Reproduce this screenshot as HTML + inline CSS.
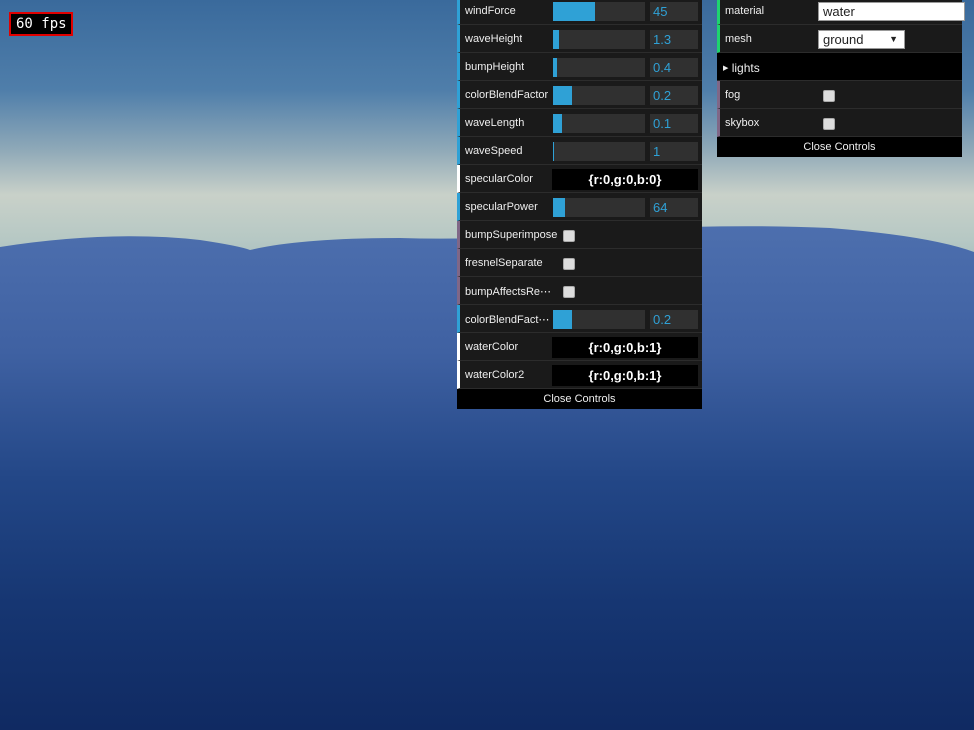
<!DOCTYPE html>
<html><head><meta charset="utf-8"><style>
*{margin:0;padding:0;box-sizing:border-box}
body{width:974px;height:730px;overflow:hidden;position:relative;font-family:"Liberation Sans",sans-serif;font-size:11px;color:#eee;
background:linear-gradient(180deg,#3a6a9c 0px,#4f7eaa 90px,#8fa9b8 150px,#c9d1c9 195px,#b6c8c4 240px,#aac0c0 260px)}
.sea{position:absolute;left:0;top:0}
.fps{position:absolute;left:9px;top:12px;width:64px;height:24px;background:#000;border:2px solid #e00000;color:#fff;font-family:"DejaVu Sans Mono","Liberation Mono",monospace;font-size:14px;line-height:20px;padding-left:5px}
.p{position:absolute;background:#1a1a1a}
.r{position:absolute;left:0;height:28px;border-bottom:1px solid #2c2c2c;border-left:3px solid #2fa1d6;background:#1a1a1a}
.l{position:absolute;left:5px;top:8px;white-space:nowrap;overflow:hidden}
.sl{position:absolute;left:93px;top:5px;width:92px;height:19px;background:#303030}
.sl i{display:block;height:100%;background:#2fa1d6}
.n{position:absolute;left:190px;top:5px;width:48px;height:19px;background:#303030;color:#2fa1d6;font-size:13px;line-height:19px;padding-left:3px}
.c{position:absolute;left:92px;top:4px;width:146px;height:21px;background:#000;color:#fff;font-weight:bold;font-size:13px;text-align:center;line-height:21px}
.cb{position:absolute;top:9px;width:12px;height:12px;background:#ddd;border:1px solid #aaa;border-radius:2px}
.close{position:absolute;left:0;height:20px;background:#000;text-align:center;line-height:20px;font-size:11px;color:#eee}
</style></head><body>
<svg class="sea" width="974" height="730">
<defs><linearGradient id="g" x1="0" y1="0" x2="0" y2="1">
<stop offset="0" stop-color="#4d6fae"/><stop offset="0.25" stop-color="#3f61a2"/><stop offset="0.5" stop-color="#234787"/><stop offset="0.75" stop-color="#163672"/><stop offset="1" stop-color="#102a62"/></linearGradient></defs>
<path d="M0 247 Q110 230 200 240 Q240 246 250 250 Q300 238 400 238 Q460 240 520 236 Q700 222 830 228 Q930 236 974 252 L974 730 L0 730Z" fill="url(#g)"/>
</svg>
<div class="fps">60 fps</div>

<div class="p" style="left:457px;top:0;width:245px;height:409px">
<div class="r" style="top:-3px;width:245px"><span class="l">windForce</span><div class="sl"><i style="width:42px"></i></div><div class="n">45</div></div>
<div class="r" style="top:25px;width:245px"><span class="l">waveHeight</span><div class="sl"><i style="width:6px"></i></div><div class="n">1.3</div></div>
<div class="r" style="top:53px;width:245px"><span class="l">bumpHeight</span><div class="sl"><i style="width:4px"></i></div><div class="n">0.4</div></div>
<div class="r" style="top:81px;width:245px"><span class="l" style="width:88px">colorBlendFactor</span><div class="sl"><i style="width:19px"></i></div><div class="n">0.2</div></div>
<div class="r" style="top:109px;width:245px"><span class="l">waveLength</span><div class="sl"><i style="width:9px"></i></div><div class="n">0.1</div></div>
<div class="r" style="top:137px;width:245px"><span class="l">waveSpeed</span><div class="sl"><i style="width:1px"></i></div><div class="n">1</div></div>
<div class="r" style="top:165px;width:245px;border-left-color:#fff"><span class="l">specularColor</span><div class="c">{r:0,g:0,b:0}</div></div>
<div class="r" style="top:193px;width:245px"><span class="l">specularPower</span><div class="sl"><i style="width:12px"></i></div><div class="n">64</div></div>
<div class="r" style="top:221px;width:245px;border-left-color:#806787"><span class="l">bumpSuperimpose</span><div class="cb" style="left:103px"></div></div>
<div class="r" style="top:249px;width:245px;border-left-color:#806787"><span class="l">fresnelSeparate</span><div class="cb" style="left:103px"></div></div>
<div class="r" style="top:277px;width:245px;border-left-color:#806787"><span class="l">bumpAffectsRe⋯</span><div class="cb" style="left:103px"></div></div>
<div class="r" style="top:305px;width:245px"><span class="l">colorBlendFact⋯</span><div class="sl"><i style="width:19px"></i></div><div class="n">0.2</div></div>
<div class="r" style="top:333px;width:245px;border-left-color:#fff"><span class="l">waterColor</span><div class="c">{r:0,g:0,b:1}</div></div>
<div class="r" style="top:361px;width:245px;border-left-color:#fff"><span class="l">waterColor2</span><div class="c">{r:0,g:0,b:1}</div></div>
<div class="close" style="top:389px;width:245px">Close Controls</div>
</div>

<div class="p" style="left:717px;top:0;width:245px;height:157px">
<div class="r" style="top:-3px;width:245px;border-left-color:#1ed36f"><span class="l">material</span><div style="position:absolute;left:98px;top:5px;width:147px;height:19px;background:#fff;border:1px solid #999;color:#222;font-size:13px;line-height:17px;padding-left:4px">water</div></div>
<div class="r" style="top:25px;width:245px;border-left-color:#1ed36f"><span class="l">mesh</span><div style="position:absolute;left:98px;top:5px;width:87px;height:19px;background:#fff;border:1px solid #999;color:#222;font-size:13px;line-height:17px;padding-left:4px">ground<span style="position:absolute;right:6px;font-size:9px">▼</span></div></div>
<div class="r" style="top:53px;width:245px;border-left:none;background:#000"><span class="l" style="left:6px;font-size:12px"><span style="font-size:7px;vertical-align:2px">▶</span> lights</span></div>
<div class="r" style="top:81px;width:245px;border-left-color:#806787"><span class="l">fog</span><div class="cb" style="left:103px"></div></div>
<div class="r" style="top:109px;width:245px;border-left-color:#806787"><span class="l">skybox</span><div class="cb" style="left:103px"></div></div>
<div class="close" style="top:137px;width:245px">Close Controls</div>
</div>
</body></html>
